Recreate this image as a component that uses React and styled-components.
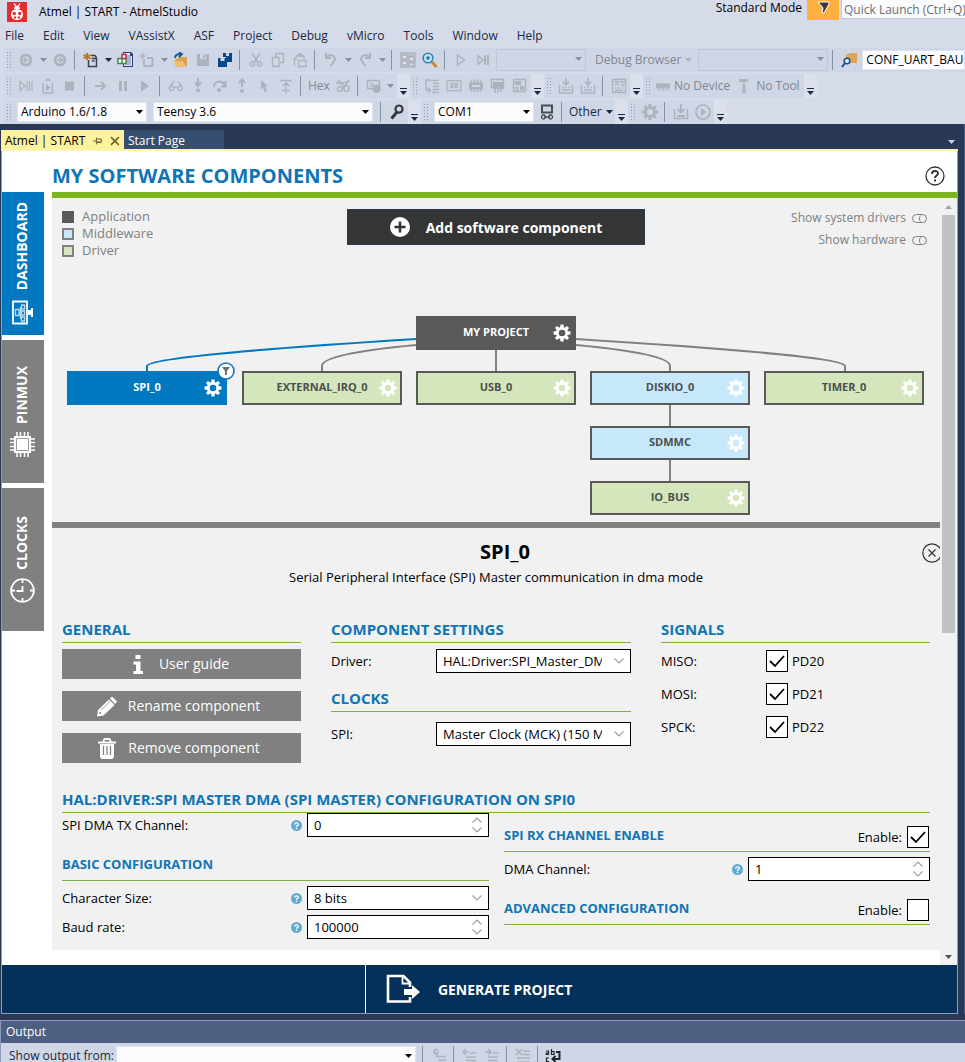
import React from "react";
import styled, { createGlobalStyle } from "styled-components";

const COLORS = {
  chrome: "#d6dbe9",
  toolbar: "#cfd6e5",
  frame: "#293955",
  frameLine: "#8e9bbc",
  chromeText: "#1b293e",
  disabled: "#aeb2bd",
  blue: "#0079c1",
  heading: "#0f75b5",
  green: "#7ab51d",
  greenLine: "#82b140",
  gray: "#808080",
  panel: "#f1f1f1",
  navy: "#04305a",
  node: "#58595b",
  driver: "#d5e6bc",
  middleware: "#c7e7fb",
};

const GlobalStyle = createGlobalStyle`
  *, *::before, *::after {
    box-sizing: border-box;
  }
  body {
    margin: 0;
    overflow: hidden;
    background: ${COLORS.frame};
    color: #000;
    font-family: "Open Sans", "Noto Sans", sans-serif;
    font-size: 13px;
  }
  button, input, select {
    font: inherit;
    color: inherit;
    margin: 0;
  }
  h1, h2, h3, p, ul {
    margin: 0;
    padding: 0;
  }
`;

/* ---------- toolbar icons, drawn on a 16px grid ---------- */

const s = (d, w = 2) => <path d={d} fill="none" stroke="currentColor" strokeWidth={w} />;
const f = (d, fill = "currentColor") => <path d={d} fill={fill} />;

const GearShape = () => (
  <>
    <circle cx="8" cy="8" r="4.4" fill="none" stroke="currentColor" strokeWidth="2.6" />
    {[0, 45, 90, 135, 180, 225, 270, 315].map((a) => (
      <path key={a} d="M6.6 0h2.8l.4 3.2H6.2z" fill="currentColor" transform={`rotate(${a} 8 8)`} />
    ))}
  </>
);

const GLYPHS = {
  back: <>{s("M8 3a5 5 0 1 0 .01 0z", 2.6)}{s("M11 8H5.5M8 5.5L5.5 8L8 10.5", 1.6)}</>,
  forward: <>{s("M8 3a5 5 0 1 0 .01 0z", 2.6)}{s("M5 8h5.5M8 5.5L10.5 8L8 10.5", 1.6)}</>,
  newProject: (
    <>
      {s("M5.5 8v6.5h8v-8h-5M8 3.5h4l1.5 2M9 9h2.5", 1.5)}
      {f("M3 1h2v2.2L7 2l1 1.6-2 1L8 6 7 7.5 5 6v2H3V6L1 7.2 0 5.6l2-1-2-1L1 2l2 1.2z", "#b5772c")}
    </>
  ),
  addItem: (
    <>
      {f("M6 0h8l2 2v13H6z", "#27406f")}
      {f("M7 1h6v3h2v10H7z", "#dfe6f5")}
      {s("M10 4h4M10 6h4M10 8h4M8 10h6M8 12h6", 1)}
      <path d="M1 6.5h4v5H1zM5 6.5h4v5H5z" fill="#fff" stroke="#3c8a4b" strokeWidth="1.5" />
      <path d="M5 2.5h4v4H5z" fill="#fff" stroke="#c02547" strokeWidth="1.5" />
    </>
  ),
  newItem: <>{s("M5 7v7h8.5V6H8", 1.8)}{s("M3.5 1v6M.5 4h6", 1.6)}</>,
  open: (
    <>
      {f("M2 7h3V5h9v9H4z", "#dca04c")}
      {f("M0 9h10l3 6H3z", "#f0bd75")}
      {s("M2 6c0-3 2-4 6-4M6 0l3 2.2L6 5", 1.8)}
    </>
  ),
  save: <>{f("M2 2h12v12H2zM5 2v5h6V2z")}{f("M8 3h2v3H8z")}</>,
  saveAll: <>{f("M6 1h9v9H9V5H6zM9 1v3h3V1z")}{f("M1 6h9v9H1zM3.5 6v3h4V6z")}</>,
  cut: <>{s("M4 1l6 9.5M12 1L6 10.5", 1.5)}{s("M4.5 10a2 2 0 1 0 .01 0zM11.5 10a2 2 0 1 0 .01 0z", 1.5)}</>,
  copy: <>{s("M6 5V1.5h7.5v9H10", 1.3)}{s("M2.5 5.5H9v9H2.5z", 1.3)}</>,
  paste: <>{s("M4 8V4h8v3M6 4c0-3 4-3 4 0", 1.4)}{s("M6.5 8.500H14v6H6.5zM2.5 6v8", 1.3)}</>,
  undo: s("M3 1v5h5M3.500 5.5c4-5 10-1 8 3L7.5 14", 2),
  redo: s("M13 1v5H8M12.5 5.5c-4-5-10-1-8 3L8.5 14", 2),
  explorer: (
    <>
      {f("M0 0h16v16H0z", "#b9bdc8")}
      <path d="M2 3h5v4H2zM2 9h5v4H2zM9 5h5v4H9zM9 11h5v3H9z" fill="#d9deea" stroke="#a2a7b3" />
    </>
  ),
  find: (
    <>
      {s("M10 10l4.5 5", 3)}
      <circle cx="6" cy="6" r="4.8" fill="#bfe6f2" stroke="#2c86ad" strokeWidth="1.6" />
      {f("M4.500 4.5h3v3h-3z", "#1f6f9c")}
    </>
  ),
  playOutline: s("M4.5 3l7 5-7 5z", 1.5),
  step: <>{s("M3 3.5L8 8l-5 4.5z", 1.4)}{s("M10 3v10M13 3v10", 2)}</>,
  findFolder: (
    <>
      {f("M5 3l4-2h7v10H5z", "#dca557")}
      <circle cx="6" cy="9" r="2.8" fill="#eef2fa" stroke="#1d4f93" strokeWidth="1.6" />
      {s("M4 11l-3 4", 2)}
    </>
  ),
  breakAll: <>{s("M2 3.5L7 8l-5 4.5z", 1.4)}{s("M9 3v10M11.5 3v10M14 3v10", 1.3)}</>,
  restart: <>{s("M3 5v10h9.500V5M5 2h6M8 0v3", 1.4)}{f("M6 6l5 3.5L6 13z")}</>,
  stop: f("M3 3.5h9v9H3z"),
  arrow: s("M2 8h10M8 4l4 4-4 4", 2),
  pause: f("M4 3h3v10H4zM9 3h3v10H9z"),
  play: f("M4 2.5l8 5.5-8 5.5z"),
  glasses: (
    <>
      {s("M3.5 8a2.3 2.3 0 1 0 .01 0zM12 8a2.3 2.3 0 1 0 .01 0z", 1.4)}
      {s("M5.5 9.5H10M1.5 9L6 3.5M14 9L10 3.5", 1.4)}
    </>
  ),
  stepInto: <>{s("M8 0v7M5 4.5L8 8l3-3.5", 2)}{f("M8 10.5a2 2 0 1 0 .01 0z")}</>,
  stepOver: <>{s("M2 9c0-7 9-7 11-1M13.5 3v5.5H9", 2)}{f("M7 10a2 2 0 1 0 .01 0z")}</>,
  stepOut: <>{s("M8 9V2M5 5l3-3.5L11 5", 2)}{f("M8 11a2 2 0 1 0 .01 0z")}</>,
  cursor: f("M5 2l7 6.5H9l2 4.5-2 1-2-4.5-2 2z"),
  toTop: s("M2 2.5h12M8 15V5M5 8l3-3.5L11 8M4 12.500h3M9 12.5h3", 1.4),
  threads: (
    <>
      {s("M1 5h8M3 2l6 6M8 10l6-8M10 4h4", 1.5)}
      {s("M5 8.5a2.5 2.5 0 1 0 .01 0zM11.5 7.5a2.5 3 0 1 0 .01 0z", 1.6)}
    </>
  ),
  watch: <>{s("M1.5 2.5h12v8h-12zM4 4.5l3 2-3 2", 1.4)}{f("M10.5 6.5a4.3 4.3 0 1 0 .01 0z")}</>,
  disasm: (
    <>
      {s("M7 2H2v10h4M4 9.5L6.5 12 4 14.5", 1.5)}
      {s("M7 2.5h8M9 5.5h6M9 8.5h6M9 11.5h6M8 14.500h7", 1.5)}
    </>
  ),
  registers: <>{s("M1 2.7h14v10H1z", 1.3)}{s("M5 5.500h2v4H5zM9.5 5.5h2v4h-2z", 1.3)}</>,
  chip: (
    <>
      {f("M1 4.5h14v7H1z")}
      {s("M3.5 1.5v3M6.5 1.5v3M9.5 1.5v3M12.5 1.5v3M3.5 11v3M6.5 11v3M9.5 11v3M12.5 11v3", 1.5)}
      <path d="M4 7h8v2H4z" fill="#d0d6e4" />
    </>
  ),
  ioView: <>{s("M1.5 1.5h12v8h-12z", 1.4)}{f("M3 4h11v7H3z")}{s("M5 9v6M8 9v6M11 9v5", 1.5)}</>,
  memView: <>{s("M1.5 1.5h12v12h-12z", 1.4)}{f("M3 3h6v4H3zM8 8h4v4H8z")}{s("M4 9h2v3H4z", 1.2)}</>,
  program: (
    <>
      {s("M1.5 7v8h13V7", 1.4)}
      {s("M4 9.5h1.5M4 12h8M7 9.5h2M10.5 9.5H12M8 0v6M5 3.5L8 7l3-3.5", 1.6)}
    </>
  ),
  erase: (
    <>
      {s("M1.5 1.5h13v13h-13z", 1.3)}
      {s("M4 3l4 4M8 3L4 7M9 4h5M4 10h1.5M7 10h2M11 10h1.5M4 12.5h8M10 7h3", 1.5)}
    </>
  ),
  wrench: <>{s("M10 1.5a3.6 3.6 0 1 0 .01 0z", 2.2)}{s("M8 8l-5.5 6.5", 3)}</>,
  serial: (
    <>
      {s("M3 1.5h10v7H3z", 2)}
      {s("M4.5 11a2 2 0 1 0 .01 0zM11.5 11a2 2 0 1 0 .01 0zM5 13h6", 1.4)}
    </>
  ),
  gear: <GearShape />,
  download: <>{s("M1.5 5v9.5h13V5", 1.4)}{s("M8 0v8M4.5 5L8 8.5 11.5 5M4 12h8", 1.8)}</>,
  playCircle: <>{s("M8 1a7 7 0 1 0 .01 0z", 1.6)}{f("M6 4l5.5 4L6 12z")}</>,
  device: <>{f("M0 5h16v5H0z")}{s("M2 10v3M5 10v3M8 10v3M11 10v3M14 10v3", 1.5)}</>,
  hammer: <>{f("M3 1h8l2 3-2-.5H9.5V5h-3V4L3 4z")}{f("M6.5 6h3v9h-3z")}</>,
  outFind: s("M4 6c-3-2 0-6 3-4M3 4l3 3 1-4M5 8.5h10M7 12h8M7 15h8", 1.6),
  outPrev: s("M1 4h6M4 1L1 4l3 3M8 5h6M4 9h10M4 12.5h10", 1.6),
  outNext: s("M1 4h6M4 1l3 3-3 3M9 5h6M4 9h10M4 12.5h10", 1.6),
  outClear: s("M1 1l6 6M7 1L1 7M8 3h7M8 6.5h7M2 10h13M2 14h13", 1.7),
};

const Glyph = ({ name, size = 16 }) => (
  <svg width={size} height={size} viewBox="0 0 16 16" fillRule="evenodd" aria-hidden="true">
    {GLYPHS[name]}
  </svg>
);

const Triangle = ({ up }) => (
  <svg width="7" height="4" viewBox="0 0 7 4" aria-hidden="true">
    <path d={up ? "M0 4L3.5 0L7 4z" : "M0 0h7L3.5 4z"} fill="currentColor" />
  </svg>
);

/* ---------- window chrome ---------- */

const Chrome = styled.header`
  background: ${COLORS.chrome};
  color: ${COLORS.chromeText};
  font-size: 12px;
  line-height: 16px;
`;

const TitleBar = styled.div`
  display: flex;
  align-items: center;
  height: 24px;
  padding-left: 7px;
  gap: 12px;
  color: #000;
`;

const TitleText = styled.div`
  flex: 1;
  white-space: nowrap;
`;

const TitleTools = styled.div`
  display: flex;
  align-self: flex-start;
  white-space: nowrap;
  gap: 2px;
`;

const ModeLabel = styled.span`
  padding-right: 3px;
`;

const FilterButton = styled.button`
  width: 32px;
  height: 20px;
  padding: 0;
  border: 0;
  background: #ffb03f;
`;

const QuickLaunch = styled.input`
  width: 124px;
  height: 19px;
  padding: 0 0 0 2px;
  border: 1px solid #c3c9d8;
  border-width: 0 0 1px 1px;
  background: #fbfcfe;

  &::placeholder {
    color: #6d6d6d;
    opacity: 1;
  }
`;

const MenuBar = styled.nav`
  display: flex;
  align-items: center;
  height: 24px;
  padding-left: 5px;
  gap: 19px;
`;

const MenuItem = styled.button`
  padding: 0;
  border: 0;
  background: none;
`;

const ToolRows = styled.div`
  display: flex;
  flex-direction: column;
  gap: 2px;
`;

const ToolRow = styled.div`
  display: flex;
  height: 24px;
  padding-left: 4px;
`;

const ToolGroup = styled.div`
  display: flex;
  align-items: center;
  flex: ${(p) => (p.$grow ? 1 : "none")};
  min-width: 0;
  background: ${COLORS.toolbar};
  white-space: nowrap;
`;

const Grip = styled.div`
  width: 5px;
  height: 18px;
  margin: 0 4px 0 2px;
  background: radial-gradient(circle, #929cb5 0.8px, transparent 1px) 0 0 / 3px 3px;
`;

const IconButton = styled.button`
  display: grid;
  place-items: center;
  width: 22px;
  height: 22px;
  padding: 0;
  border: 0;
  background: none;
  color: ${(p) => p.$color || COLORS.disabled};
`;

const TextButton = styled.button`
  display: flex;
  align-items: center;
  gap: 4px;
  padding: 0 ${(p) => (p.$tight ? 2 : 4)}px;
  border: 0;
  background: none;
  color: ${(p) => (p.$off ? "#83878f" : COLORS.chromeText)};

  svg:first-child {
    color: ${(p) => (p.$off ? COLORS.disabled : "inherit")};
  }
`;

const Caret = styled.span`
  display: grid;
  place-items: center;
  width: 12px;
  color: ${(p) => (p.$on ? COLORS.chromeText : "#8b909c")};
`;

const Separator = styled.div`
  width: 1px;
  height: 20px;
  margin: 0 5px 0 3px;
  background: #8591a6;
`;

const OverflowButton = styled.button`
  align-self: stretch;
  display: flex;
  flex-direction: column;
  align-items: center;
  justify-content: flex-end;
  gap: 2px;
  width: 13px;
  padding: 0 0 3px;
  border: 0;
  background: #dce0ec;
  color: ${COLORS.chromeText};

  &::before {
    content: "";
    width: 7px;
    height: 1px;
    background: currentColor;
  }
`;

const ComboBox = styled.div`
  position: relative;
  width: ${(p) => p.$width};
  flex: ${(p) => (p.$width ? "none" : 1)};
  min-width: 0;
  height: ${(p) => (p.$off ? 22 : 20)}px;
  margin: 0 ${(p) => p.$after || 0}px 0 2px;
  color: ${(p) => (p.$off ? "#8b909c" : "#000")};

  select {
    appearance: none;
    width: 100%;
    height: 100%;
    padding: 0 ${(p) => (p.$open ? 16 : 0)}px 0 3px;
    border: 1px solid ${(p) => (p.$off ? "#b9c1d2" : "#dfe3ee")};
    border-radius: 0;
    background: ${(p) => (p.$off ? "none" : "#fcfcfe")};
  }

  svg {
    position: absolute;
    right: 4px;
    top: 8px;
  }
`;

const Combo = ({ label, value, width, off, after, open = true }) => (
  <ComboBox $width={width} $off={off} $after={after} $open={open}>
    <select aria-label={label} disabled={off}>
      <option>{value}</option>
    </select>
    {open && <Triangle />}
  </ComboBox>
);

const Tool = ({ icon, color }) => (
  <IconButton type="button" aria-label={icon} $color={color}>
    <Glyph name={icon} />
  </IconButton>
);

const Tools = ({ icons }) =>
  icons.map((icon, i) => {
    if (icon === "|") return <Separator key={i} />;
    if (icon === "v") {
      return <Caret key={i}><Triangle /></Caret>;
    }
    return <Tool key={i} icon={icon} />;
  });

const Overflow = () => (
  <OverflowButton type="button" aria-label="Toolbar options">
    <Triangle />
  </OverflowButton>
);

const MENU = ["File", "Edit", "View", "VAssistX", "ASF", "Project", "Debug", "vMicro", "Tools", "Window", "Help"];

const AppLogo = () => (
  <svg width="20" height="20" viewBox="0 0 20 20" aria-hidden="true">
    <path d="M0 0h20v20H0z" fill="#e32e30" />
    <path d="M7 1.5l2.5 3M13 1.5L11 4.5" stroke="#fff" strokeWidth="1.3" />
    <path d="M10 4a3 2.5 0 0 1 3 3H7a3 2.5 0 0 1 3-3z" fill="#fff" />
    <ellipse cx="10" cy="12.5" rx="6" ry="5.5" fill="#fff" />
    <circle cx="7.3" cy="11.5" r="1.7" fill="#e32e30" />
    <circle cx="12.7" cy="11.5" r="1.7" fill="#e32e30" />
    <circle cx="8" cy="15.5" r="1.2" fill="#e32e30" />
    <circle cx="12" cy="15.5" r="1.2" fill="#e32e30" />
  </svg>
);

const WindowChrome = () => (
  <Chrome>
    <TitleBar>
      <AppLogo />
      <TitleText>Atmel | START - AtmelStudio</TitleText>
      <TitleTools>
        <ModeLabel>Standard Mode</ModeLabel>
        <FilterButton type="button" aria-label="Filter">
          <svg width="14" height="14" viewBox="0 0 14 14">
            <path d="M2 1h11v2L8 12H6L7 7z" fill="#3b3b3b" stroke="#fff" />
          </svg>
        </FilterButton>
        <QuickLaunch aria-label="Quick Launch" placeholder="Quick Launch (Ctrl+Q)" />
      </TitleTools>
    </TitleBar>
    <MenuBar>
      {MENU.map((item) => (
        <MenuItem key={item} type="button">{item}</MenuItem>
      ))}
    </MenuBar>
    <ToolRows>
      <ToolRow>
        <ToolGroup $grow>
          <Grip />
          <Tools icons={["back", "v", "forward", "|"]} />
          <Tool icon="newProject" color="#3a3f4a" />
          <Caret $on><Triangle /></Caret>
          <Tool icon="addItem" color="#6d7fa8" />
          <Tools icons={["newItem", "v"]} />
          <Tool icon="open" color="#12599e" />
          <Tool icon="save" />
          <Tool icon="saveAll" color="#06488c" />
          <Tools icons={["|", "cut", "copy", "paste", "|", "undo", "v", "redo", "v", "|", "explorer"]} />
          <Tool icon="find" color="#c98a2c" />
          <Tools icons={["|", "playOutline", "step"]} />
          <Combo label="Configuration" value="" width="90px" off after={5} />
          <TextButton type="button" $off>
            Debug Browser
            <Triangle />
          </TextButton>
          <Combo label="Browser" value="" width="130px" off after={1} />
          <Separator />
          <Tool icon="findFolder" color="#1d4f93" />
          <Combo label="Find" value="CONF_UART_BAUD" open={false} />
        </ToolGroup>
      </ToolRow>
      <ToolRow>
        <ToolGroup>
          <Grip />
          <Tools
            icons={[
              "breakAll", "restart", "stop", "|", "arrow", "pause", "play", "|",
              "glasses", "stepInto", "stepOver", "stepOut", "cursor", "toTop", "|",
            ]}
          />
          <TextButton type="button" $off $tight>Hex</TextButton>
          <Tools icons={["threads", "|", "watch", "v"]} />
          <Overflow />
        </ToolGroup>
        <ToolGroup>
          <Grip />
          <Tools icons={["disasm", "registers", "chip", "ioView", "memView"]} />
          <Overflow />
        </ToolGroup>
        <ToolGroup>
          <Grip />
          <Tools icons={["program", "program", "|", "erase"]} />
          <Overflow />
        </ToolGroup>
        <ToolGroup>
          <Grip />
          <TextButton type="button" $off $tight>
            <Glyph name="device" size={14} />
            No Device
          </TextButton>
          <TextButton type="button" $off>
            <Glyph name="hammer" />
            No Tool
          </TextButton>
          <Overflow />
        </ToolGroup>
      </ToolRow>
      <ToolRow>
        <ToolGroup>
          <Grip />
          <Combo label="IDE" value="Arduino 1.6/1.8" width="130px" after={4} />
          <Combo label="Board" value="Teensy 3.6" width="220px" after={4} />
          <Separator />
          <Tool icon="wrench" color="#34363d" />
          <Overflow />
        </ToolGroup>
        <ToolGroup>
          <Grip />
          <Combo label="Port" value="COM1" width="100px" after={2} />
          <Tool icon="serial" color="#4a4d55" />
          <Separator />
          <TextButton type="button" $tight>
            Other
            <Triangle />
          </TextButton>
          <Overflow />
        </ToolGroup>
        <ToolGroup>
          <Grip />
          <Tools icons={["gear", "|", "download", "playCircle"]} />
          <Overflow />
        </ToolGroup>
      </ToolRow>
    </ToolRows>
  </Chrome>
);

/* ---------- document well ---------- */

const Workspace = styled.div`
  padding: 6px 6px 0 1px;
  border-right: 1px solid #4d6082;
  background: ${COLORS.frame};
`;

const DocTabs = styled.div`
  display: flex;
  align-items: stretch;
  height: 21px;
  border-bottom: 2px solid #fdf4b0;
  font-size: 12px;
  line-height: 16px;
`;

const DocTab = styled.button`
  display: flex;
  align-items: center;
  width: ${(p) => (p.$active ? 123 : 100)}px;
  padding: 2px 4px 0;
  border: 0;
  background: ${(p) => (p.$active ? "#fff29d" : "#364e6f")};
  color: ${(p) => (p.$active ? "#000" : "#fff")};
  white-space: nowrap;

  svg {
    margin-left: 8px;
  }
`;

const TabList = styled.button`
  margin-left: auto;
  padding: 0 3px 0 0;
  border: 0;
  background: none;
  color: #ced4dd;
`;

const Document = styled.div`
  border: 1px solid ${COLORS.frameLine};
  border-top: 0;
  background: #fff;
`;

const Page = styled.div`
  display: flex;
  gap: 8px;
`;

const SideNav = styled.nav`
  display: flex;
  flex-direction: column;
  flex: none;
  gap: 5px;
  width: 42px;
  padding-top: 41px;
`;

const SideTab = styled.button`
  display: flex;
  flex-direction: column;
  align-items: center;
  justify-content: center;
  gap: 9px;
  height: 143px;
  padding: 0 2px 0 0;
  border: 0;
  background: ${(p) => (p.$active ? COLORS.blue : COLORS.gray)};
  color: #fff;
  font-size: 14px;
  font-weight: 700;
  line-height: 20px;

  span {
    writing-mode: vertical-rl;
    transform: rotate(180deg);
  }
`;

const Main = styled.main`
  flex: 1;
  min-width: 0;
  display: flex;
  flex-direction: column;
`;

const PageHeader = styled.div`
  display: flex;
  align-items: center;
  justify-content: space-between;
  height: 47px;
  padding: 8px 12px 0 0;
  border-bottom: 6px solid ${COLORS.green};
`;

const PageTitle = styled.h1`
  color: ${COLORS.heading};
  font-size: 20px;
  line-height: 26px;
`;

const RoundButton = styled.button`
  display: grid;
  place-items: center;
  padding: 0;
  border: 0;
  background: none;
`;

const ScrollArea = styled.div`
  flex: 1;
  display: flex;
`;

const ScrollContent = styled.div`
  flex: 1;
  min-width: 0;
  padding-bottom: 15px;
`;

const ScrollBar = styled.div`
  display: flex;
  flex-direction: column;
  align-items: center;
  flex: none;
  width: 17px;
  background: ${COLORS.panel};
`;

const ScrollArrow = styled.div`
  display: grid;
  place-items: center;
  height: 17px;
  color: ${(p) => (p.$off ? "#a3a3a3" : "#505050")};
`;

const ScrollThumb = styled.div`
  flex: 57;
  width: 13px;
  background: #c1c1c1;
`;

const ScrollRest = styled.div`
  flex: 43;
`;

/* ---------- component diagram ---------- */

const DiagramPanel = styled.section`
  border-bottom: 6px solid ${COLORS.gray};
  background: ${COLORS.panel};
`;

const DiagramBar = styled.div`
  display: grid;
  grid-template-columns: 1fr 298px 1fr;
  align-items: start;
  padding: 9px 10px 0;
  color: ${COLORS.gray};
`;

const Legend = styled.ul`
  padding-top: 1px;
  list-style: none;
  line-height: 17px;
`;

const LegendItem = styled.li`
  display: flex;
  align-items: center;
  gap: 8px;

  &::before {
    content: "";
    width: 12px;
    height: 12px;
    border: 2px solid ${(p) => (p.$color === COLORS.node ? COLORS.node : COLORS.gray)};
    background: ${(p) => p.$color};
  }
`;

const AddButton = styled.button`
  display: flex;
  align-items: center;
  justify-content: center;
  gap: 16px;
  height: 36px;
  margin-top: 2px;
  padding: 0;
  border: 1px solid #2b3a4a;
  background: #343636;
  color: #fff;
  font-size: 14px;
  font-weight: 700;
`;

const Toggles = styled.div`
  display: flex;
  flex-direction: column;
  align-items: flex-end;
  padding-right: 3px;
  font-size: 12px;
`;

const Toggle = styled.label`
  display: flex;
  align-items: center;
  gap: 6px;
  line-height: 22px;

  input {
    appearance: none;
    display: grid;
    align-items: center;
    justify-content: end;
    width: 15px;
    height: 9px;
    border: 1px solid ${COLORS.gray};
    border-radius: 5px;
  }

  input::before {
    content: "";
    width: 7px;
    height: 7px;
    border-left: 1px solid ${COLORS.gray};
    border-radius: 4px;
  }
`;

const Diagram = styled.div`
  position: relative;
  width: 888px;
  height: 263px;
  margin: 0 auto;
`;

const Links = styled.svg`
  display: block;
  fill: none;
  stroke: ${COLORS.gray};
  stroke-width: 2;
`;

const Node = styled.button`
  position: absolute;
  left: ${(p) => p.$x}px;
  top: ${(p) => p.$y}px;
  width: 160px;
  height: 34px;
  padding: 0 0 3px;
  border: ${(p) => (p.$kind === "selected" ? 0 : 2)}px solid ${COLORS.node};
  background: ${(p) =>
    ({ app: COLORS.node, selected: COLORS.blue, driver: COLORS.driver, middleware: COLORS.middleware })[p.$kind]};
  color: ${(p) => (p.$kind === "app" || p.$kind === "selected" ? "#fff" : "#4c4f50")};
  font-size: 11px;
  font-weight: 700;
`;

const NodeGear = styled.svg`
  position: absolute;
  right: ${(p) => (p.$inset ? 5 : 3)}px;
  top: calc(50% - 9px);
  color: #fff;
`;

const FilterBadge = styled.svg`
  position: absolute;
  right: -8px;
  top: -9px;
`;

const NODES = [
  { name: "MY PROJECT", kind: "app", x: 364, y: 57 },
  { name: "SPI_0", kind: "selected", x: 15, y: 112 },
  { name: "EXTERNAL_IRQ_0", kind: "driver", x: 190, y: 112 },
  { name: "USB_0", kind: "driver", x: 364, y: 112 },
  { name: "DISKIO_0", kind: "middleware", x: 538, y: 112 },
  { name: "TIMER_0", kind: "driver", x: 712, y: 112 },
  { name: "SDMMC", kind: "middleware", x: 538, y: 167 },
  { name: "IO_BUS", kind: "driver", x: 538, y: 222 },
];

const ComponentDiagram = () => (
  <Diagram>
    <Links width="888" height="263" aria-hidden="true">
      <path d="M364 86C300 92 270 99 270 107V112" />
      <path d="M524 86C588 92 618 99 618 107V112" />
      <path d="M524 80C650 88 792 98 793 107V112" />
      <path d="M444 90V112M618 146V167M618 201V222" />
      <path d="M364 80C238 88 96 98 95 107V112" stroke={COLORS.blue} />
    </Links>
    {NODES.map(({ name, kind, x, y }) => (
      <Node key={name} type="button" $kind={kind} $x={x} $y={y}>
        {name}
        <NodeGear $inset={kind === "selected"} width="18" height="18" viewBox="-0.5 -0.5 17 17">
          <GearShape />
        </NodeGear>
        {kind === "selected" && (
          <FilterBadge width="18" height="18" viewBox="0 0 18 18">
            <circle cx="9" cy="9" r="8" fill="#fff" stroke="#0f75b5" strokeWidth="1.5" />
            <path d="M5 5h8l-3 4v4H8V9z" fill="#6d6e70" />
          </FilterBadge>
        )}
      </Node>
    ))}
  </Diagram>
);

/* ---------- component detail ---------- */

const Detail = styled.section`
  position: relative;
  padding: 11px 10px;
  background: ${COLORS.panel};
  overflow: hidden;
  line-height: 20px;
`;

const DetailTitle = styled.h1`
  padding-left: 18px;
  font-size: 20px;
  line-height: 26px;
  text-align: center;
`;

const DetailText = styled.p`
  margin-top: 2px;
  text-align: center;
`;

const CloseButton = styled(RoundButton)`
  position: absolute;
  top: 15px;
  right: -2px;
`;

const Columns = styled.div`
  display: grid;
  grid-template-columns: 239fr 300fr 269fr;
  gap: 30px;
  margin-top: 32px;
`;

const SectionTitle = styled.h2`
  margin-top: ${(p) => p.$top || 0}px;
  padding-bottom: 3px;
  border-bottom: 1px solid ${COLORS.greenLine};
  color: ${COLORS.heading};
  font-size: 15px;
  line-height: 20px;
`;

const Stack = styled.div`
  display: flex;
  flex-direction: column;
  gap: ${(p) => p.$gap || 0}px;
  padding-top: ${(p) => p.$top || 0}px;
`;

const ActionButton = styled.button`
  display: flex;
  align-items: center;
  justify-content: center;
  gap: 11px;
  height: 30px;
  padding: 0 6px 0 0;
  border: 0;
  background: ${COLORS.gray};
  color: #fff;
  font-size: 14px;
`;

const Field = styled.div`
  display: flex;
  align-items: center;
  height: 24px;

  > label {
    flex: 1;
  }
`;

const Control = styled.div`
  position: relative;
  width: ${(p) => p.$width};
  height: 24px;

  select,
  input {
    appearance: none;
    width: 100%;
    height: 100%;
    padding: 0 28px 0 6px;
    border: 1px solid #000;
    border-radius: 0;
    background: #fff;
  }

  input::-webkit-inner-spin-button {
    appearance: none;
  }

  svg {
    position: absolute;
    right: 6px;
    top: 0;
  }
`;

const Chevrons = ({ spin }) => (
  <svg width="12" height="24" viewBox="0 0 12 24" fill="none" stroke="#a0a0a0" strokeWidth="1.2" aria-hidden="true">
    <path d={spin ? "M1.500 9.5L6 5L10.500 9.5M1.5 14.5L6 19L10.5 14.5" : "M1.500 9.5L6 14L10.5 9.5"} />
  </svg>
);

const CheckBox = styled.span`
  position: relative;
  display: block;
  width: 22px;
  height: 22px;

  input {
    appearance: none;
    display: block;
    width: 22px;
    height: 22px;
    border: 1px solid #000;
    background: #fff;
  }

  svg {
    position: absolute;
    inset: 0;
    pointer-events: none;
    visibility: hidden;
  }

  input:checked + svg {
    visibility: visible;
  }
`;

const Check = ({ id, checked, label }) => (
  <CheckBox>
    <input type="checkbox" id={id} aria-label={label} defaultChecked={checked} />
    <svg width="22" height="22" viewBox="0 0 22 22" fill="none" stroke="#000" strokeWidth="1.8">
      <path d="M4 11l5 5L18 6" />
    </svg>
  </CheckBox>
);

const SignalRow = styled.label`
  display: flex;
  align-items: center;
  height: 24px;
  gap: 4px;
`;

const SignalName = styled.span`
  width: 101px;
`;

const ConfigColumns = styled.div`
  display: grid;
  grid-template-columns: 427fr 426fr;
  align-items: start;
  gap: 15px;
`;

const SubHeader = styled.div`
  display: flex;
  align-items: center;
  justify-content: space-between;
  min-height: 26px;
  margin-top: ${(p) => p.$top}px;
  padding: 0 1px 3px 0;
  border-bottom: 1px solid ${COLORS.greenLine};

  h3 {
    padding-bottom: 4px;
    color: ${COLORS.heading};
    font-size: 13px;
    line-height: 18px;
  }

  label {
    display: flex;
    align-items: center;
    gap: 5px;
  }
`;

const HelpDot = styled.svg`
  margin-right: 5px;
`;

const Help = () => (
  <HelpDot width="11" height="11" viewBox="0 0 12 12" aria-hidden="true">
    <circle cx="6" cy="6" r="6" fill="#62abd3" />
    <path d="M4 4.8c0-2.3 4-2.3 4 0C8 6 6 5.8 6 7.3" fill="none" stroke="#fff" strokeWidth="1.4" />
    <circle cx="6" cy="9.2" r=".9" fill="#fff" />
  </HelpDot>
);

const SelectField = ({ id, label, value, help, width = "195px" }) => (
  <Field>
    <label htmlFor={id}>{label}</label>
    {help && <Help />}
    <Control $width={width}>
      <select id={id}>
        <option>{value}</option>
      </select>
      <Chevrons />
    </Control>
  </Field>
);

const NumberField = ({ id, label, value }) => (
  <Field>
    <label htmlFor={id}>{label}</label>
    <Help />
    <Control $width="182px">
      <input id={id} type="number" defaultValue={value} />
      <Chevrons spin />
    </Control>
  </Field>
);

const ACTIONS = [
  {
    label: "User guide",
    icon: <path d="M7.500 1h5v4h-5zM5.500 7.5h7V17H15v3H5.5v-3H8v-6.5H5.5z" fill="#fff" />,
  },
  {
    label: "Rename component",
    icon: (
      <>
        <path d="M0 20.5l1-6.5L12 3.500l5.5 5.5L6.5 19.5z" fill="#fff" />
        <path d="M13 2.5l2-2 5 5-2 2.500z" fill="#fff" />
        <path d="M4 14l9-8.5" stroke="#808080" strokeWidth=".8" />
        <circle cx="3.2" cy="17" r="1" fill="#808080" />
      </>
    ),
  },
  {
    label: "Remove component",
    icon: (
      <>
        <path d="M1 3.5h18v2H1zM3 6h14v13l-1.500 2h-11L3 19z" fill="#fff" />
        <path d="M6 4l1.5-3h5L14 4" fill="none" stroke="#fff" strokeWidth="1.8" />
        <path d="M6.5 8v9M10 8v9M13.5 8v9" stroke="#808080" strokeWidth="1.2" />
      </>
    ),
  },
];

const SIGNALS = [
  { name: "MISO:", pin: "PD20" },
  { name: "MOSI:", pin: "PD21" },
  { name: "SPCK:", pin: "PD22" },
];

const ComponentDetail = () => (
  <Detail>
    <DetailTitle>SPI_0</DetailTitle>
    <DetailText>Serial Peripheral Interface (SPI) Master communication in dma mode</DetailText>
    <CloseButton type="button" aria-label="Close">
      <svg width="20" height="20" viewBox="0 0 20 20" fill="none" stroke="#333" strokeWidth="1.2">
        <circle cx="10" cy="10" r="9.2" />
        <path d="M6.5 6.5l7 7M13.5 6.500l-7 7" />
      </svg>
    </CloseButton>
    <Columns>
      <div>
        <SectionTitle>GENERAL</SectionTitle>
        <Stack $top={6} $gap={12}>
          {ACTIONS.map(({ label, icon }) => (
            <ActionButton key={label} type="button">
              <svg width="20" height="21" viewBox="0 0 20 21" aria-hidden="true">{icon}</svg>
              {label}
            </ActionButton>
          ))}
        </Stack>
      </div>
      <div>
        <SectionTitle>COMPONENT SETTINGS</SectionTitle>
        <Stack $top={6}>
          <SelectField id="driver" label="Driver:" value="HAL:Driver:SPI_Master_DMA" />
        </Stack>
        <SectionTitle $top={15}>CLOCKS</SectionTitle>
        <Stack $top={10}>
          <SelectField id="clock" label="SPI:" value="Master Clock (MCK) (150 MHz)" />
        </Stack>
      </div>
      <div>
        <SectionTitle>SIGNALS</SectionTitle>
        <Stack $top={6} $gap={9}>
          {SIGNALS.map(({ name, pin }) => (
            <SignalRow key={name}>
              <SignalName>{name}</SignalName>
              <Check checked />
              {pin}
            </SignalRow>
          ))}
        </Stack>
      </div>
    </Columns>
    <SectionTitle $top={26}>HAL:DRIVER:SPI MASTER DMA (SPI MASTER) CONFIGURATION ON SPI0</SectionTitle>
    <ConfigColumns>
      <div>
        <NumberField id="tx" label="SPI DMA TX Channel:" value="0" />
        <SubHeader $top={18}>
          <h3>BASIC CONFIGURATION</h3>
        </SubHeader>
        <Stack $top={5} $gap={5}>
          <SelectField id="size" label="Character Size:" value="8 bits" width="182px" help />
          <NumberField id="baud" label="Baud rate:" value="100000" />
        </Stack>
      </div>
      <div>
        <SubHeader $top={13}>
          <h3>SPI RX CHANNEL ENABLE</h3>
          <label>
            Enable:
            <Check checked />
          </label>
        </SubHeader>
        <Stack $top={5}>
          <NumberField id="rx" label="DMA Channel:" value="1" />
        </Stack>
        <SubHeader $top={18}>
          <h3>ADVANCED CONFIGURATION</h3>
          <label>
            Enable:
            <Check />
          </label>
        </SubHeader>
      </div>
    </ConfigColumns>
  </Detail>
);

/* ---------- footer and output pane ---------- */

const Footer = styled.footer`
  display: grid;
  grid-template-columns: 38% 1fr;
  height: 48px;
  background: ${COLORS.navy};
`;

const GenerateButton = styled.button`
  grid-column: 2;
  display: flex;
  align-items: center;
  gap: 18px;
  padding: 0 0 0 20px;
  border: 0;
  border-left: 1px solid #fff;
  background: none;
  color: #fff;
  font-size: 14px;
  font-weight: 700;
`;

const OutputPane = styled.section`
  margin-top: 6px;
  border: solid ${COLORS.frameLine};
  border-width: 1px 0 0 1px;
  font-size: 12px;
  line-height: 16px;
`;

const OutputTitle = styled.div`
  padding: 3px 5px;
  background: #4d6082;
  color: #fff;
`;

const OutputBar = styled.div`
  display: flex;
  align-items: center;
  height: 26px;
  padding-left: 8px;
  background: ${COLORS.toolbar};
  color: ${COLORS.chromeText};
  white-space: nowrap;
`;

const OutputLabel = styled.span`
  width: 105px;
`;

const SIDE_TABS = [
  {
    label: "DASHBOARD",
    icon: (
      <>
        <path d="M3 1.500h14v22H3z" fill="none" stroke="#fff" strokeWidth="1.8" />
        <path
          d="M5.5 9.500h3.500v6H5.5zM11.5 5h3v4h-3zM11.5 11h3v4h-3zM11.5 17h3v4h-3zM9 12.5h2.5M10.5 7v12"
          fill="none"
          stroke="#b9dbf0"
          strokeWidth="1.3"
        />
        <path d="M18 10h3V8h2v9h-2v-2h-3z" fill="#fff" />
      </>
    ),
  },
  {
    label: "PINMUX",
    icon: (
      <>
        <path d="M4 4h17v17H4z" fill="#fff" />
        <path d="M6.5 6.5h12v12h-12z" fill="#fff" stroke="#808080" strokeWidth=".8" />
        <path
          d="M7 0v4M10.5 0v4M14.500 0v4M18 0v4M7 21v4M10.5 21v4M14.5 21v4M18 21v4M0 7h4M0 10.5h4M0 14.5h4M0 18h4M21 7h4M21 10.5h4M21 14.5h4M21 18h4"
          stroke="#fff"
          strokeWidth="1.5"
        />
      </>
    ),
  },
  {
    label: "CLOCKS",
    icon: (
      <path
        d="M12.5 1.2a11.3 11.3 0 1 0 .01 0zM12.5 1v4M12.5 20v4M1 12.5h4M20 12.5h4M6.5 13h6V8"
        fill="none"
        stroke="#fff"
        strokeWidth="1.8"
      />
    ),
  },
];

const App = () => (
  <>
    <GlobalStyle />
    <WindowChrome />
    <Workspace>
      <DocTabs>
        <DocTab type="button" $active>
          Atmel | START
          <svg width="9" height="8" viewBox="0 0 9 8" fill="none" stroke="#6b6237">
            <path d="M0 4h3M3.5 .5v7M4 2h4.5v3.5H4M4 5h4" />
          </svg>
          <svg width="10" height="10" viewBox="0 0 10 10" stroke="#6b6237" strokeWidth="1.6">
            <path d="M1 1l8 8M9 1L1 9" />
          </svg>
        </DocTab>
        <DocTab type="button">Start Page</DocTab>
        <TabList type="button" aria-label="Open documents">
          <Triangle />
        </TabList>
      </DocTabs>
      <Document>
        <Page>
          <SideNav>
            {SIDE_TABS.map(({ label, icon }, i) => (
              <SideTab key={label} type="button" $active={i === 0}>
                <span>{label}</span>
                <svg width="25" height="25" viewBox="0 0 25 25" aria-hidden="true">{icon}</svg>
              </SideTab>
            ))}
          </SideNav>
          <Main>
            <PageHeader>
              <PageTitle>MY SOFTWARE COMPONENTS</PageTitle>
              <RoundButton type="button" aria-label="Help">
                <svg width="20" height="20" viewBox="0 0 20 20" fill="none" stroke="#333">
                  <circle cx="10" cy="10" r="9" strokeWidth="1.3" />
                  <path d="M7 8c0-4 6-4 6-.5C13 9.5 10 9.5 10 12" strokeWidth="1.9" />
                  <path d="M10 13.5v2" strokeWidth="2" />
                </svg>
              </RoundButton>
            </PageHeader>
            <ScrollArea>
              <ScrollContent>
                <DiagramPanel>
                  <DiagramBar>
                    <Legend>
                      <LegendItem $color={COLORS.node}>Application</LegendItem>
                      <LegendItem $color={COLORS.middleware}>Middleware</LegendItem>
                      <LegendItem $color={COLORS.driver}>Driver</LegendItem>
                    </Legend>
                    <AddButton type="button">
                      <svg width="20" height="20" viewBox="0 0 20 20" aria-hidden="true">
                        <circle cx="10" cy="10" r="10" fill="#fff" />
                        <path d="M10 4.5v11M4.5 10h11" stroke="#343636" strokeWidth="2.6" />
                      </svg>
                      Add software component
                    </AddButton>
                    <Toggles>
                      <Toggle>
                        Show system drivers
                        <input type="checkbox" role="switch" />
                      </Toggle>
                      <Toggle>
                        Show hardware
                        <input type="checkbox" role="switch" />
                      </Toggle>
                    </Toggles>
                  </DiagramBar>
                  <ComponentDiagram />
                </DiagramPanel>
                <ComponentDetail />
              </ScrollContent>
              <ScrollBar>
                <ScrollArrow $off><Triangle up /></ScrollArrow>
                <ScrollThumb />
                <ScrollRest />
                <ScrollArrow><Triangle /></ScrollArrow>
              </ScrollBar>
            </ScrollArea>
          </Main>
        </Page>
        <Footer>
          <GenerateButton type="button">
            <svg width="34" height="30" viewBox="0 0 34 30" aria-hidden="true">
              <path d="M24 13V8.5L17.5 2H2v25.5h22V23" fill="none" stroke="#fff" strokeWidth="2.6" />
              <path d="M16.5 2v7.5H24" fill="none" stroke="#fff" strokeWidth="1.8" />
              <path d="M18 15h8v-4l8 7-8 7v-4h-8z" fill="#fff" />
            </svg>
            GENERATE PROJECT
          </GenerateButton>
        </Footer>
      </Document>
    </Workspace>
    <OutputPane>
      <OutputTitle>Output</OutputTitle>
      <OutputBar>
        <OutputLabel>Show output from:</OutputLabel>
        <Combo label="Show output from" value="" width="300px" after={3} />
        <Separator />
        <Tools icons={["outFind", "|", "outPrev", "outNext", "|", "outClear", "|"]} />
        <TextButton type="button" aria-label="Word wrap" $tight>
          <svg width="16" height="14" viewBox="0 0 16 14" fill="none" stroke="#23262e">
            <path d="M1 2h2.500v3.5H1.2V4h2M6.5 0v5.5H9v-3H6.5M4 9H1.500v3.5H4" strokeWidth="1.2" />
            <path d="M11 3h3.500v7H8M10.5 7L7.5 10l3 3" strokeWidth="2" />
          </svg>
        </TextButton>
      </OutputBar>
    </OutputPane>
  </>
);

export default App;
